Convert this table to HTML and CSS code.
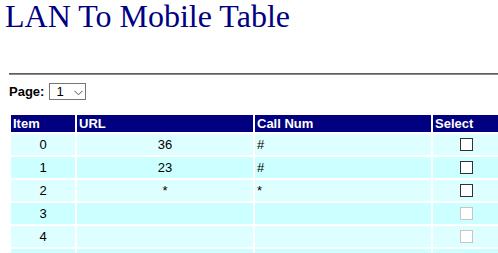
FILE: index.html
```html
<!DOCTYPE html>
<html lang="en">
<head>
<meta charset="utf-8">
<title>LAN To Mobile Table</title>
<link rel="stylesheet" href="styles.css">
</head>
<body>
<h1 class="title">LAN To Mobile Table</h1>
<div class="content">
  <hr class="rule">
  <div class="pager">
    <label class="pager-label" for="page">Page:</label>
    <span class="select-wrap">
      <select id="page" class="page-select"><option>1</option></select>
      <svg class="chev" width="9" height="6" viewBox="0 0 9 6"><path d="M0.5 0.8 L4.5 4.8 L8.5 0.8" fill="none" stroke="#555" stroke-width="1"/></svg>
    </span>
  </div>
  <table class="grid">
    <colgroup>
      <col class="c-item"><col class="c-url"><col class="c-call"><col class="c-sel">
    </colgroup>
    <thead>
      <tr><th>Item</th><th>URL</th><th>Call Num</th><th>Select</th></tr>
    </thead>
    <tbody>
      <tr class="light"><td class="mid">0</td><td class="mid">36</td><td>#</td><td class="mid"><input type="checkbox" class="pick"></td></tr>
      <tr class="dark"><td class="mid">1</td><td class="mid">23</td><td>#</td><td class="mid"><input type="checkbox" class="pick"></td></tr>
      <tr class="light"><td class="mid">2</td><td class="mid">*</td><td>*</td><td class="mid"><input type="checkbox" class="pick"></td></tr>
      <tr class="dark"><td class="mid">3</td><td class="mid"></td><td></td><td class="mid"><input type="checkbox" class="pick" disabled></td></tr>
      <tr class="light"><td class="mid">4</td><td class="mid"></td><td></td><td class="mid"><input type="checkbox" class="pick" disabled></td></tr>
      <tr class="dark"><td class="mid">5</td><td class="mid"></td><td></td><td class="mid"><input type="checkbox" class="pick" disabled></td></tr>
    </tbody>
  </table>
</div>
</body>
</html>
```
FILE: styles.css
```css
html, body {
  overflow: hidden;
}
body {
  margin: 0;
  background: #fff;
  font-family: "Liberation Sans", Arial, sans-serif;
  font-size: 13px;
  color: #000;
}
.title {
  margin: 0;
  padding-left: 5px;
  font-family: "Liberation Serif", "Times New Roman", serif;
  font-weight: normal;
  font-size: 32px;
  line-height: 32px;
  color: #000080;
}
.content {
  padding-left: 9px;
  width: 492px;
}
.rule {
  margin: 41px 0 0 0;
  height: 0;
  border: 0;
  border-top: 1px solid #5f5f5f;
  border-bottom: 1px solid #8a8a8a;
}
.pager {
  display: flex;
  align-items: center;
  gap: 5px;
  margin-top: 8px;
  height: 17px;
}
.pager-label {
  font-weight: bold;
}
.select-wrap {
  position: relative;
  display: inline-block;
}
.page-select {
  appearance: none;
  -webkit-appearance: none;
  display: block;
  box-sizing: border-box;
  width: 37px;
  height: 17px;
  margin: 0;
  padding: 0 0 0 6px;
  border: 1px solid #767676;
  border-radius: 0;
  background: #fff;
  font-family: "Liberation Sans", Arial, sans-serif;
  font-size: 13px;
  color: #000;
}
.chev {
  position: absolute;
  left: 25px;
  top: 7px;
  pointer-events: none;
}
.grid {
  margin-top: 13px;
  border-collapse: separate;
  border-spacing: 2px;
  table-layout: fixed;
  width: 492px;
}
.c-item { width: 64px; }
.c-url { width: 176px; }
.c-call { width: 176px; }
.c-sel { width: 66px; }
.grid th {
  background: #000080;
  color: #fff;
  font-weight: bold;
  text-align: left;
  padding: 0 2px;
  height: 17px;
  line-height: 17px;
}
.grid td {
  padding: 0 2px;
  height: 21px;
  vertical-align: middle;
  text-align: left;
}
.grid td.mid {
  text-align: center;
}
.light td { background: #ddffff; }
.dark td { background: #ccffff; }

/* square, flat checkbox */
.pick {
  appearance: none;
  -webkit-appearance: none;
  display: block;
  box-sizing: border-box;
  margin: 0 auto;
  width: 13px;
  height: 13px;
  border: 1px solid #333;
  border-radius: 0;
  background: #fff;
}
.pick:disabled {
  border-color: #c6c6c6;
}
```
